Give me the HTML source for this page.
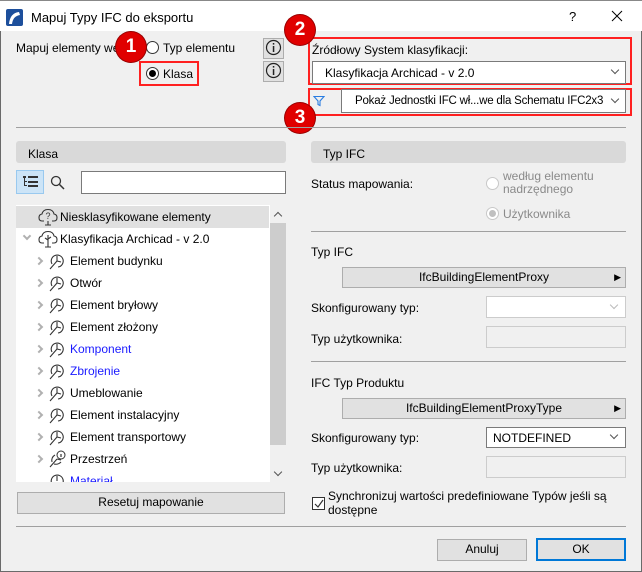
<!DOCTYPE html>
<html><head><meta charset="utf-8"><style>
*{box-sizing:border-box;margin:0;padding:0}
body{width:642px;height:572px;overflow:hidden;background:#f0f0f0;font-family:"Liberation Sans",sans-serif;font-size:12px;color:#000;position:relative}
.a{position:absolute;white-space:nowrap}
.win{position:absolute;left:0;top:0;width:642px;height:572px;border:1px solid #6a6a6a;border-top:none}
.title{position:absolute;left:0;top:0;width:642px;height:31px;background:#fff;border-top:1px solid #888}
.hdr{position:absolute;background:#d9d9d9;border-radius:3px;height:22px;padding:6px 0 0 12px}
.btn{position:absolute;background:#e1e1e1;border:1px solid #adadad;text-align:center;line-height:19px}
.fld{position:absolute;background:#fff;border:1px solid #7a7a7a}
.dis{background:#f0f0f0;border-color:#ccc}
.line{position:absolute;height:1px;background:#a0a0a0}
.badge{position:absolute;width:30px;height:30px;border-radius:50%;background:#e00000;color:#fff;font-size:19px;font-weight:bold;text-align:center;line-height:30px;box-shadow:0 0 0 1px #900}
.red{position:absolute;border:2px solid #ff2020}
.chev{position:absolute;width:6px;height:6px;border-right:1px solid #555;border-bottom:1px solid #555;transform:rotate(45deg)}
.row{position:absolute;left:16px;width:253px;height:22px}
.row .t{position:absolute;left:54px;top:4px}
.row .ar{position:absolute;left:20px;top:8px;width:6px;height:6px;border-right:2px solid #b0b0b0;border-top:2px solid #b0b0b0;transform:rotate(45deg)}
.row svg{position:absolute;left:32px;top:2px}
.blue{color:#1a1aff}
.radio{position:absolute;width:13px;height:13px;border-radius:50%;border:1px solid #333;background:#fff}
</style></head><body>
<div class="win"></div>
<div class="title">
<svg class="a" style="left:6px;top:8px" width="17" height="17" viewBox="0 0 17 17"><rect width="17" height="17" rx="2" fill="#1d4f9c"/><path d="M3 15 Q4 4 13 3 L14 6 Q7 7 6 15Z" fill="#fff"/></svg>
<div class="a" style="left:31px;top:9px;font-size:13px">Mapuj Typy IFC do eksportu</div>
<div class="a" style="left:569px;top:8px;font-size:13px">?</div>
<svg class="a" style="left:611px;top:9px" width="12" height="12" viewBox="0 0 12 12"><path d="M1 1L11 11M11 1L1 11" stroke="#000" stroke-width="1"/></svg>
</div>
<div class="a" style="left:16px;top:41px">Mapuj elementy we</div>
<div class="radio" style="left:146px;top:41px"></div>
<div class="a" style="left:163px;top:41px">Typ elementu</div>
<div class="red" style="left:139px;top:61px;width:60px;height:25px"></div>
<div class="radio" style="left:146px;top:67px"><div style="position:absolute;left:2px;top:2px;width:7px;height:7px;border-radius:50%;background:#000"></div></div>
<div class="a" style="left:163px;top:67px">Klasa</div>
<div class="btn" style="left:263px;top:38px;width:21px;height:21px;line-height:16px"><svg width="17" height="17" viewBox="0 0 17 17"><circle cx="8.5" cy="8.5" r="7" fill="none" stroke="#222" stroke-width="1.2"/><rect x="7.8" y="7" width="1.5" height="6" fill="#222"/><rect x="7.8" y="4" width="1.5" height="1.6" fill="#222"/></svg></div>
<div class="btn" style="left:263px;top:61px;width:21px;height:21px;line-height:16px"><svg width="17" height="17" viewBox="0 0 17 17"><circle cx="8.5" cy="8.5" r="7" fill="none" stroke="#222" stroke-width="1.2"/><rect x="7.8" y="7" width="1.5" height="6" fill="#222"/><rect x="7.8" y="4" width="1.5" height="1.6" fill="#222"/></svg></div>
<div class="red" style="left:308px;top:37px;width:324px;height:48px"></div>
<div class="a" style="left:312px;top:43px">Źródłowy System klasyfikacji:</div>
<div class="fld" style="left:312px;top:61px;width:314px;height:23px"><span class="a" style="left:12px;top:4px">Klasyfikacja Archicad - v 2.0</span></div>
<div class="chev" style="left:612px;top:67px"></div>
<div class="red" style="left:308px;top:88px;width:324px;height:28px"></div>
<svg class="a" style="left:313px;top:95px" width="12" height="12" viewBox="0 0 12 12"><path d="M1 1.5H11L7 6V10.5L5 9.5V6Z" fill="none" stroke="#2a7de1" stroke-width="1.1"/></svg>
<div class="fld" style="left:341px;top:89px;width:285px;height:24px"><span class="a" style="left:13px;top:5px;font-size:11.5px;letter-spacing:-0.2px">Pokaż Jednostki IFC wł...we dla Schematu IFC2x3</span></div>
<div class="chev" style="left:612px;top:96px"></div>
<div class="badge" style="left:116px;top:32px">1</div>
<div class="badge" style="left:285px;top:15px">2</div>
<div class="badge" style="left:285px;top:103px">3</div>
<div class="line" style="left:16px;top:127px;width:610px"></div>
<div class="hdr" style="left:16px;top:141px;width:270px">Klasa</div>
<div class="a" style="left:16px;top:170px;width:28px;height:24px;background:#cce4f7;border:1px solid #99c9ef"><svg style="position:absolute;left:6px;top:5px" width="16" height="12" viewBox="0 0 16 12"><g fill="#333"><rect x="0" y="0" width="3" height="2"/><rect x="5" y="0" width="10" height="2"/><rect x="1" y="2" width="1" height="8"/><rect x="2" y="5" width="2" height="1"/><rect x="5" y="5" width="10" height="2"/><rect x="2" y="9" width="2" height="1"/><rect x="5" y="9" width="10" height="2"/></g></svg></div>
<svg class="a" style="left:50px;top:175px" width="16" height="16" viewBox="0 0 16 16"><circle cx="6" cy="6" r="4.5" fill="none" stroke="#333" stroke-width="1.3"/><path d="M9.5 9.5L14 14" stroke="#333" stroke-width="1.5"/></svg>
<div class="fld" style="left:81px;top:171px;width:205px;height:23px"></div>
<div class="a" style="left:16px;top:205px;width:254px;height:277px;background:#fff"></div>
<div class="a" style="left:270px;top:205px;width:16px;height:277px;background:#f0f0f0"></div>
<div class="a" style="left:270px;top:223px;width:16px;height:222px;background:#cdcdcd"></div>
<div class="chev" style="left:275px;top:213px;transform:rotate(225deg)"></div>
<div class="chev" style="left:275px;top:469px"></div>
<div class="row" style="top:206px;background:#e0e0e0"><svg style="left:22px" width="20" height="18" viewBox="0 0 20 18"><path d="M6 13H4Q1 13 1 9.5Q1 6.5 4 6Q5 1.5 10 1.5Q15 1.5 16 6Q19 6.5 19 9.5Q19 13 16 13H14M10 13V17M7 17H13" fill="none" stroke="#333" stroke-width="1.1"/><text x="10" y="11" font-size="9" text-anchor="middle" font-family="Liberation Sans" fill="#333">?</text></svg><span class="t" style="left:44px">Niesklasyfikowane elementy</span></div>
<div class="row" style="top:228px"><div class="ar" style="left:8px;top:5px;transform:rotate(135deg)"></div><svg style="left:22px" width="20" height="18" viewBox="0 0 20 18"><path d="M6 13H4Q1 13 1 9.5Q1 6.5 4 6Q5 1.5 10 1.5Q15 1.5 16 6Q19 6.5 19 9.5Q19 13 16 13H14M10 5V17M7 17H13M10 10L7 8M10 9L13 7" fill="none" stroke="#333" stroke-width="1.1"/></svg><span class="t" style="left:44px">Klasyfikacja Archicad - v 2.0</span></div>
<div class="row" style="top:250px"><div class="ar"></div><svg width="18" height="18" viewBox="0 0 18 18"><path d="M4 12A6 6 0 1 1 10 15M2 17L9 9M9 9V4M9 9L13 10" fill="none" stroke="#333" stroke-width="1.1"/></svg><span class="t">Element budynku</span></div>
<div class="row" style="top:272px"><div class="ar"></div><svg width="18" height="18" viewBox="0 0 18 18"><path d="M4 12A6 6 0 1 1 10 15M2 17L9 9M9 9V4M9 9L13 10" fill="none" stroke="#333" stroke-width="1.1"/></svg><span class="t">Otwór</span></div>
<div class="row" style="top:294px"><div class="ar"></div><svg width="18" height="18" viewBox="0 0 18 18"><path d="M4 12A6 6 0 1 1 10 15M2 17L9 9M9 9V4M9 9L13 10" fill="none" stroke="#333" stroke-width="1.1"/></svg><span class="t">Element bryłowy</span></div>
<div class="row" style="top:316px"><div class="ar"></div><svg width="18" height="18" viewBox="0 0 18 18"><path d="M4 12A6 6 0 1 1 10 15M2 17L9 9M9 9V4M9 9L13 10" fill="none" stroke="#333" stroke-width="1.1"/></svg><span class="t">Element złożony</span></div>
<div class="row" style="top:338px"><div class="ar"></div><svg width="18" height="18" viewBox="0 0 18 18"><path d="M4 12A6 6 0 1 1 10 15M2 17L9 9M9 9V4M9 9L13 10" fill="none" stroke="#333" stroke-width="1.1"/></svg><span class="t blue">Komponent</span></div>
<div class="row" style="top:360px"><div class="ar"></div><svg width="18" height="18" viewBox="0 0 18 18"><path d="M4 12A6 6 0 1 1 10 15M2 17L9 9M9 9V4M9 9L13 10" fill="none" stroke="#333" stroke-width="1.1"/></svg><span class="t blue">Zbrojenie</span></div>
<div class="row" style="top:382px"><div class="ar"></div><svg width="18" height="18" viewBox="0 0 18 18"><path d="M4 12A6 6 0 1 1 10 15M2 17L9 9M9 9V4M9 9L13 10" fill="none" stroke="#333" stroke-width="1.1"/></svg><span class="t">Umeblowanie</span></div>
<div class="row" style="top:404px"><div class="ar"></div><svg width="18" height="18" viewBox="0 0 18 18"><path d="M4 12A6 6 0 1 1 10 15M2 17L9 9M9 9V4M9 9L13 10" fill="none" stroke="#333" stroke-width="1.1"/></svg><span class="t">Element instalacyjny</span></div>
<div class="row" style="top:426px"><div class="ar"></div><svg width="18" height="18" viewBox="0 0 18 18"><path d="M4 12A6 6 0 1 1 10 15M2 17L9 9M9 9V4M9 9L13 10" fill="none" stroke="#333" stroke-width="1.1"/></svg><span class="t">Element transportowy</span></div>
<div class="row" style="top:448px"><div class="ar"></div><svg width="20" height="18" viewBox="0 0 20 18"><path d="M4 12A6 6 0 0 1 7 5M2 17L9 9M9 9L13 10M6 14Q10 15 13 12" fill="none" stroke="#333" stroke-width="1.1"/><circle cx="13" cy="5" r="4" fill="#fff" stroke="#333"/><rect x="12.4" y="4" width="1.2" height="3" fill="#333"/></svg><span class="t">Przestrzeń</span></div>
<div class="a" style="left:16px;top:470px;width:254px;height:12px;overflow:hidden"><svg style="position:absolute;left:32px;top:2px" width="18" height="18" viewBox="0 0 18 18"><path d="M4 12A6 6 0 1 1 10 15M9 9V4" fill="none" stroke="#333" stroke-width="1.1"/></svg><span class="a blue" style="left:54px;top:4px">Materiał</span></div>
<div class="btn" style="left:17px;top:492px;width:268px;height:22px">Resetuj mapowanie</div>
<div class="hdr" style="left:311px;top:141px;width:315px">Typ IFC</div>
<div class="a" style="left:311px;top:177px">Status mapowania:</div>
<div class="radio" style="left:486px;top:177px;border-color:#c8c8c8"></div>
<div class="a" style="left:503px;top:170px;color:#8a8a8a;line-height:13px;white-space:normal;width:110px">według elementu nadrzędnego</div>
<div class="radio" style="left:486px;top:207px;border-color:#c8c8c8"><div style="position:absolute;left:2px;top:2px;width:7px;height:7px;border-radius:50%;background:#c0c0c0"></div></div>
<div class="a" style="left:503px;top:207px;color:#8a8a8a">Użytkownika</div>
<div class="line" style="left:311px;top:231px;width:315px"></div>
<div class="a" style="left:311px;top:245px">Typ IFC</div>
<div class="btn" style="left:342px;top:267px;width:284px;height:21px">IfcBuildingElementProxy<span class="a" style="right:4px;top:0;font-size:9px">▶</span></div>
<div class="a" style="left:311px;top:301px">Skonfigurowany typ:</div>
<div class="fld dis" style="left:486px;top:296px;width:140px;height:22px;background:#fff"></div>
<div class="chev" style="left:611px;top:302px;border-color:#bbb"></div>
<div class="a" style="left:311px;top:332px">Typ użytkownika:</div>
<div class="fld dis" style="left:486px;top:326px;width:140px;height:22px"></div>
<div class="line" style="left:311px;top:361px;width:315px"></div>
<div class="a" style="left:311px;top:376px">IFC Typ Produktu</div>
<div class="btn" style="left:342px;top:398px;width:284px;height:21px">IfcBuildingElementProxyType<span class="a" style="right:4px;top:0;font-size:9px">▶</span></div>
<div class="a" style="left:311px;top:431px">Skonfigurowany typ:</div>
<div class="fld" style="left:486px;top:427px;width:140px;height:21px"><span class="a" style="left:6px;top:3px">NOTDEFINED</span></div>
<div class="chev" style="left:611px;top:432px"></div>
<div class="a" style="left:311px;top:461px">Typ użytkownika:</div>
<div class="fld dis" style="left:486px;top:456px;width:140px;height:22px"></div>
<div class="a" style="left:312px;top:497px;width:13px;height:13px;border:1px solid #333;background:#fff"><svg style="position:absolute;left:1px;top:1px" width="10" height="10" viewBox="0 0 10 10"><path d="M1 5L4 8L9 1" fill="none" stroke="#333" stroke-width="1.2"/></svg></div>
<div class="a" style="left:328px;top:489px;line-height:14px">Synchronizuj wartości predefiniowane Typów jeśli są<br>dostępne</div>
<div class="line" style="left:16px;top:526px;width:610px"></div>
<div class="btn" style="left:437px;top:539px;width:90px;height:22px">Anuluj</div>
<div class="btn" style="left:536px;top:538px;width:90px;height:23px;border:2px solid #0078d7;line-height:18px">OK</div>
</body></html>
